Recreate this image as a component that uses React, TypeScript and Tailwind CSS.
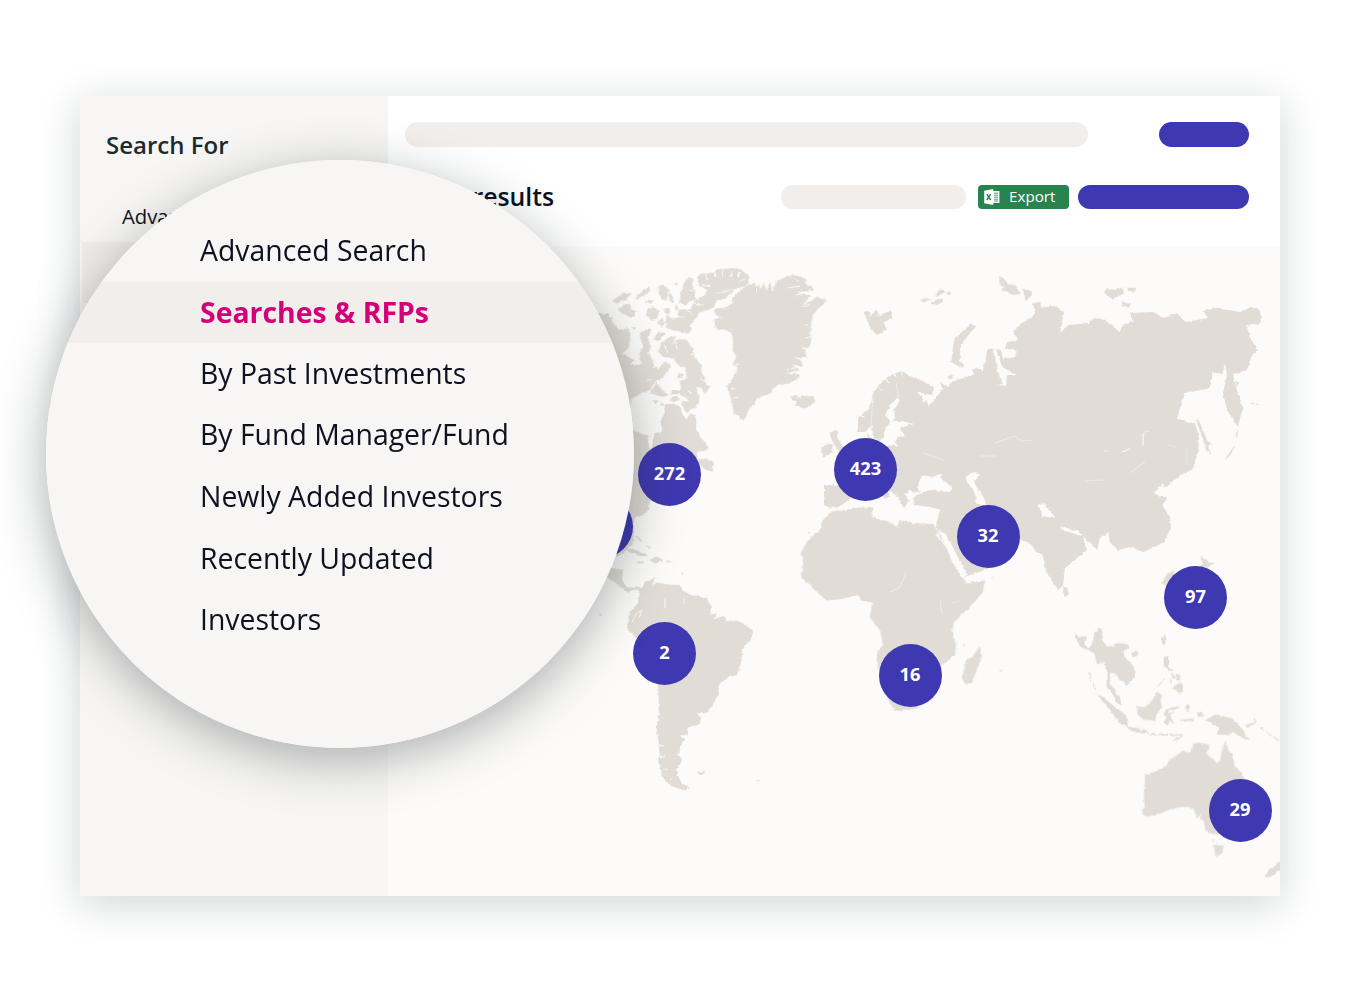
import { clsx } from "clsx";

interface Region {
  x: number;
  y: number;
  d: string;
}

// Coastlines, drawn at a third of a pixel from each region's origin.
const land: Region[] = [
  {
    // Greenland, Iceland and the Canadian arctic
    x: 590,
    y: 250,
    d: `M480 102L505 103 512 120 522 98 530 124 540 97 548 128 560 92 575 88 590 80 605 76 640 82 650 92 642 98 668 112 670 122 612 126 662 136 632 172 680 142 708 150 705 158 685 175 668 195 664 215 660 250 664 265 658 290 645 300 648 320 632 325 636 350 600 345 632 360 585 370 630 376 615 390 595 400 560 406 540 430 500 445 490 465 475 480 462 512 450 500 432 488 425 450 412 410 432 380 445 350 428 345 440 320 430 300 428 255 410 238 378 236 372 208 398 205 372 190 375 178 410 172 430 158 425 145 460 115Z
M325 105L325 78 335 70 360 72 380 62 400 58 430 55 460 65 478 80 475 100 460 108 430 120 400 122 375 130 350 118Z
M318 150L340 140 355 118 375 132 430 122 405 145 380 152 370 172 350 180 325 188 318 205 300 218 285 200 262 196 264 180 300 178Z
M298 80L308 88 306 110 315 120 312 140 320 148 300 152 288 165 268 160 275 120 285 95Z
M230 195L245 206 285 202 310 212 300 225 305 238 295 250 260 242 232 235 228 210Z
M65 152L100 132 125 128 108 148 80 160ZM85 178L105 162 125 168 120 180 140 185 125 202 95 190ZM140 135L178 112 180 122 155 142 140 148ZM205 112L220 105 235 120 230 150 215 148 210 135ZM238 130l12 10 0 18-12-5ZM172 178L190 172 208 182 200 205 185 210 170 198ZM204 216l12-12 8 14-10 12ZM225 175l14 4-2 14-12-4ZM165 155l24-4-8 10ZM255 100l8 0-4 10ZM256 164l8 10-6 8Z
M205 305L215 280 235 262 258 260 240 290 262 268 290 270 298 285 310 295 310 320 335 345 332 365 345 385 345 400 360 410 345 432 332 412 318 410 328 440 325 462 305 465 290 445 268 432 245 432 245 420 275 420 270 395 292 385 285 350 265 345 250 325 220 320Z
M0 190L55 192 72 225 90 240 118 235 122 265 112 300 95 310 132 330 118 345 150 345 178 310 192 350 205 358 225 335 240 345 235 360 215 385 190 400 180 420 150 430 120 450 118 500 0 500Z
M124 232l14 2-6 8ZM150 252L165 240 185 240 172 262 182 290 170 320 155 338 145 318 160 290ZM190 270L205 246 225 250 210 270ZM180 430L200 398 215 420 235 435 220 440ZM190 450l14 4-8 8ZM212 458l10 4-6 6ZM262 375l14-4 4 8-14 4ZM240 448l20-10 10 10-20 8Z
M605 440L620 435 625 448 640 438 670 440 675 455 645 475 615 465 622 455 608 450Z`,
  },
  {
    // North America and the Caribbean
    x: 590,
    y: 400,
    d: `M0 40L120 75 135 95 175 108 172 138 185 150 195 100 215 98 218 80 212 62 225 40 225 16 240 12 270 18 275 42 290 60 300 40 318 48 318 90 330 110 355 140 350 150 320 155 322 178 350 178 370 186 368 214 345 208 330 195 300 220 200 300 178 305 176 328 160 345 132 352 130 395 132 425 100 460 0 500Z
M275 4L322 8 320 22 300 28 292 42 280 20ZM105 446L130 448 172 466 155 470 120 455ZM180 480L200 470 222 482 195 488ZM232 483h10v4h-10zM142 485h18v4h-18zM136 408l20 12-4 4ZM170 436l12 6-4 4ZM276 516l4 8-4 0Z`,
  },
  {
    // South America
    x: 590,
    y: 560,
    d: `M40 50L65 25 98 30 95 60 115 85 140 80 155 85 170 65 192 56 186 78 200 68 240 75 268 75 275 90 300 105 350 115 365 145 355 165 380 160 370 180 390 170 405 170 410 185 440 182 470 195 488 215 485 235 455 270 455 300 440 345 410 352 385 378 385 400 370 430 350 460 318 456 332 475 328 492 292 502 293 525 270 525 285 540 275 550 268 575 258 580 275 595 272 610 260 625 262 645 275 670 295 682 280 690 240 676 218 650 205 600 210 580 205 535 200 500 208 460 205 375 160 290 140 235 112 205 118 158 145 130 150 100 140 88 125 90 110 97 70 62Z
M323 638l20-5-2 8-14 2zM500 660l6 2-2 4ZM28 164l6 0 0 4Z`,
  },
  {
    // British Isles and arctic islands
    x: 790,
    y: 350,
    d: `M120 250L135 240 145 246 140 260 155 285 165 310 150 330 138 318 150 305 138 290 128 275ZM95 295L110 282 127 284 125 308 100 320Z
M222-114L235-116 240-98 258-120 262-100 302-118 306-95 278-85 290-62 262-46 246-58 236-80Z
M392-150l20-6 6 8-16 4ZM436-166l20-18 10 10-18 12ZM420-140l16-8 18-6 8 8-22 10ZM470-172l14 2-8 6Z
M475 78l10-2 2 8-10 4Z`,
  },
  {
    // Africa and Madagascar
    x: 790,
    y: 480,
    d: `M125 95L160 92 200 84 248 82 244 105 260 118 295 125 320 142 330 122 370 130 430 133 442 155 435 165 470 205 485 245 520 295 530 312 585 302 578 335 545 375 490 430 485 455 497 490 495 525 455 555 410 640 380 685 350 688 315 692 300 670 260 545 262 520 280 495 272 455 240 410 248 365 215 362 205 345 180 350 150 357 108 360 75 330 35 290 40 255 35 215 55 180 90 150 100 120Z
M568 500L575 525 560 570 545 608 525 612 516 590 525 565 528 540 550 530ZM52 158l8-2-2 6ZM628 568l8 0-4 4ZM520 490l4 6-4 0ZM602 293l10 0-4 4Z`,
  },
  {
    // Russian arctic, Kamchatka, Sakhalin and the Kurils
    x: 940,
    y: 260,
    d: `M80 205L95 190 105 200 72 240 60 270 58 300 75 320 60 322 35 305 40 260 45 235Z
M178 50L190 55 205 75 195 82 180 75ZM182 90L205 75 225 75 242 102 220 104 200 94ZM250 88L275 95 275 105 258 122ZM492 100L500 85 525 90 548 86 550 98 520 118ZM560 84l28 0-4 10-20-2ZM545 125l28 10-6 6-16-2Z
M768 478L780 490 802 545 815 552 802 555 812 585 800 570 785 525ZM890 508l4 6-6 20ZM884 560l-14 26-14 12 20-30ZM932 428l10 4-8 0ZM948 432l10 2ZM888 366l8 2-6 12Z`,
  },
  {
    // South-east Asia, Japan and New Guinea
    x: 1060,
    y: 550,
    d: `M12 108L20 112 26 130 18 140 10 132ZM422 18L440 34 460 40 440 55 420 52 428 38ZM305 98L318 78 342 60 340 90 318 105Z
M45 250L58 262 78 260 72 278 84 296 96 285 102 250 118 235 128 240 124 268 142 290 160 288 170 280 198 282 208 294 190 302 192 318 215 345 226 365 222 385 200 405 192 395 178 390 165 365 152 368 148 400 160 415 178 440 186 466 170 458 158 432 140 408 144 370 130 335 112 342 104 310 88 302 62 290 52 272Z
M215 312l12-8 8 4-8 14-10-4ZM306 262l10-8 0 14-6 18-4-10ZM312 322L325 318 328 340 322 350 340 362 330 362 312 348ZM335 368l10 12-8 4ZM348 372l10 2 2 22-10-8ZM328 385l10 10-6 4ZM336 415L355 400 368 404 368 425 358 432 350 420ZM314 385L292 410 298 408Z
M112 434L130 442 165 472 190 490 204 512 202 530 178 518 150 480ZM202 530L235 535 262 545 266 550 235 548 205 540ZM270 550h18v5h-18zM296 552h28v4h-28zM330 552h36v4h-36zM340 568l30-12-18 14Z
M230 470L255 472 280 448 292 425 306 436 300 450 305 470 290 490 285 512 250 508 235 498ZM318 480L330 474 358 470 352 476 328 480 322 490 344 486 330 494 340 522 328 510 324 526 314 520 318 500 312 492ZM380 462l8 10-6 12ZM365 510l36-4 0 4-34 4ZM408 490l16-4 8 10-18 4Z
M436 510L465 494 515 505 545 535 566 568 545 562 520 545 505 555 470 550 478 535 460 520ZM555 528l26-10 2-14 4 14-24 14ZM600 530l12 8-4 2ZM620 544l16 14-4 0ZM640 560l12 6 6 6-10-4ZM90 366l2 26-4-10ZM100 402l4 18Z`,
  },
  {
    // Australia and New Zealand
    x: 1120,
    y: 730,
    d: `M75 135L105 125 135 112 155 85 190 62 210 70 222 42 235 38 268 45 258 72 290 96 302 92 306 60 316 32 325 62 338 72 342 105 360 125 375 150 340 300 282 312 258 302 252 275 240 262 250 245 232 262 222 240 205 230 180 230 150 238 120 250 80 260 66 250 75 230 72 195 76 160ZM282 345L312 348 302 370 288 382ZM276 328l6 2-4 4Z
M490 392L470 402 445 425 435 440 450 442 478 418 490 410Z`,
  },
];

const eurasia = `M824 485L846 486 860 460 868 434 873 447 883 445 898 446 895 443 897 437 905 436 900 428 913 424 903 421 893 421 895 418 894 410 900 400 897 398 890 405 885 415 890 422 885 430 884 437 878 441 873 436 872 425 865 432 858 432 858 418 870 408 873 393 882 382 890 375 902 371 910 376 923 381 934 388 932 395 917 392 922 397 923 403 927 400 928 406 934 401 940 392 943 390 940 382 947 387 953 381 973 375 977 368 980 374 975 375 972 369 983 370 985 363 987 350 992 348 995 357 998 372 1003 384 996 385 1006 386 1007 375 1017 375 1002 367 999 357 996 350 1001 349 1003 359 1015 357 1018 352 1005 348 1007 342 1018 340 1013 332 1023 322 1035 315 1033 303 1040 302 1042 308 1053 305 1064 312 1060 333 1068 325 1090 323 1093 318 1105 320 1120 332 1122 325 1133 322 1130 313 1153 312 1163 318 1177 313 1185 322 1208 318 1203 311 1217 308 1240 312 1252 307 1260 310 1261 323 1247 325 1250 338 1258 350 1252 355 1247 370 1233 374 1237 390 1243 407 1238 427 1227 410 1223 393 1227 375 1225 363 1222 375 1213 372 1210 388 1185 393 1177 418 1187 422 1195 423 1199 437 1198 453 1192 470 1183 473 1165 488 1163 483 1154 492 1160 497 1167 497 1162 505 1170 517 1171 528 1163 543 1143 552 1130 547 1118 550 1110 542 1108 533 1100 538 1097 550 1093 545 1083 537 1087 550 1065 568 1063 585 1058 590 1047 573 1042 553 1037 553 1030 543 1020 540 1010 560 990 568 965 577 940 537 936 525 940 510 930 507 915 505 913 497 922 493 910 491 904 494 909 501 904 508 897 496 885 487 890 495 886 500 880 492 860 492 847 502 838 507 830 508 824 505Z`;

const seas = `M922 475L933 477 942 473 940 478 952 487 950 492 930 490 921 493 917 488ZM965 478L973 472 980 475 974 482 985 500 986 507 976 503 975 493Z
M1037 505L1043 503 1055 517 1042 517 1041 510ZM1060 526L1080 532 1082 536 1062 530ZM938 530L946 534 967 575 962 578Z`;

const rivers = `M995 443L1014 436 1022 441 1032 440M980 456h16M1103 451h6M1121 452l10-4M1150 431l-6 1-1 14M1187 449v14M1168 445l8 2M1085 481l20-1M1130 473l16-12M923 453l10 3 12 5M890 592l10-5 6-14M940 600l2 14M952 603l8-2M873 393l-2 33M896 383l3 16`;

// Narrow inlets cut into the northern coasts and Patagonia.
const fjords = `M705 274l3 6M714 270l2 7M722 270l1 7M732 271l-1 6M740 272l-2 6M745 279l-7 3M702 285l9 2M690 290l8 3M695 303l8 2M686 310l6 4M756 284l1 9M772 282l1 9M780 276l-4 8M793 278l6 3M800 286l-12 2M806 293l-10 2M810 305l-9 1M808 325l-4 0M811 337l-6 1M808 349l-6-2M802 360l-8-3M800 367l-12 2M734 365l5-1M733 372l4 3M731 389l4 0M733 399l5-2M664 345l4 8M676 342l1 8M690 356l4-4M698 366l3-3M704 381l-4-1M688 391l5 3M640 355l-4 6M630 350l4 6M646 382l6-3M885 378l4 4M877 387l4 3M870 400l4 2M860 416l5 1M894 372l2 5M902 371l0 6M659 745l5 1M660 757l5-1M664 770l4-2M670 780l4-3`;

const pins = [
  { label: "272", place: "left-[250px] top-[196.5px]" },
  { label: "", place: "left-[182px] top-[249px]" },
  { label: "423", place: "left-[446px] top-[191.5px]" },
  { label: "32", place: "left-[568.5px] top-[259px]" },
  { label: "97", place: "left-[776px] top-[319.5px]" },
  { label: "2", place: "left-[245px] top-[376px]" },
  { label: "16", place: "left-[490.5px] top-[397.5px]" },
  { label: "29", place: "left-[820.5px] top-[532.5px]" },
];

const menu = [
  "Advanced Search",
  "Searches & RFPs",
  "By Past Investments",
  "By Fund Manager/Fund",
  "Newly Added Investors",
  "Recently Updated",
  "Investors",
];

function ExcelIcon() {
  return (
    <svg className="h-4 w-4" viewBox="0 0 16 16">
      <path d="M9 2h6.4v12H9z" fill="#fff" />
      <path d="M0.2 1.7 9.2 0v16L0.2 14.3z" fill="#fff" />
      <path d="M2.8 5.2 6.6 11M6.6 5.2 2.8 11" stroke="#29834f" strokeWidth="1.4" />
      <path
        d="M10 4.2h4M10 6.2h4M10 8.2h4M10 10.2h4M10 12h4"
        stroke="#29834f"
        strokeWidth="0.8"
      />
    </svg>
  );
}

function WorldMap() {
  return (
    <div className="relative h-[650px] overflow-hidden bg-[#fcfbf9]">
      <svg className="block h-[650px] w-[892px]" viewBox="388 246 892 650">
        <filter id="coast" x="0" y="0" width="100%" height="100%">
          <feTurbulence type="fractalNoise" baseFrequency="0.25" numOctaves="2" seed="4" />
          <feDisplacementMap
            in="SourceGraphic"
            scale="3.2"
            xChannelSelector="R"
            yChannelSelector="G"
          />
        </filter>
        <g filter="url(#coast)" fill="#e1dcd6">
          <path d={eurasia} />
          {land.map((r) => (
            <path
              key={`${r.x}-${r.y}`}
              d={r.d}
              transform={`translate(${r.x} ${r.y}) scale(0.33333)`}
              stroke="#e1dcd6"
              strokeWidth="1.6"
            />
          ))}
          <path d={seas} fill="#fcfbf9" />
          <path d={fjords} fill="none" stroke="#fcfbf9" strokeWidth="1" />
        </g>
        <path d={rivers} fill="none" stroke="#fcfbf9" strokeWidth="0.6" opacity="0.8" />
        <path
          d="M1143 433v12M1122 452l8-3M632 622l4-8 6-4-3 8M665 598v10M684 598v6"
          fill="none"
          stroke="#fcfbf9"
          strokeWidth="0.9"
        />
      </svg>
      {pins.map((pin) => (
        <div
          key={pin.place}
          className={clsx(
            "absolute flex h-[63px] w-[63px] items-center justify-center rounded-full bg-[#3f39b1] pb-[3px] text-[18.3px] font-bold text-white",
            pin.place,
          )}
        >
          {pin.label}
        </div>
      ))}
    </div>
  );
}

function Sidebar() {
  return (
    <aside className="w-[308px] shrink-0 bg-[#f7f6f4]">
      <h2 className="px-[26px] pt-8 text-2xl leading-[34px] font-semibold text-[#1c2b30]">
        Search For
      </h2>
      <p className="mt-[39px] pl-[42px] text-[20.3px] leading-[30px] text-[#0d1120]">
        Advanced Search
      </p>
      <div className="mt-[11px] ml-0.5 h-[61px] bg-[#f0ecea]" />
    </aside>
  );
}

function Lens() {
  return (
    <div className="absolute top-[160px] left-[46px] h-[588px] w-[588px] overflow-hidden rounded-full bg-[#f7f6f4] pt-[60px]">
      {menu.map((item, i) => (
        <div
          key={item}
          className={clsx(
            "flex items-center pb-px pl-[154px] text-[28.4px] whitespace-nowrap",
            i === 1
              ? "h-[61px] bg-[#f1eeeb] font-bold text-[#d4007a]"
              : "text-[#0d1120]",
            (i === 0 || i > 2) && "h-[62px]",
            i === 2 && "h-[61px]",
            i === 6 && "-mt-px",
          )}
        >
          {item}
        </div>
      ))}
    </div>
  );
}

export default function App() {
  return (
    <div className="relative h-[992px] w-[1360px] overflow-hidden bg-white px-20 py-24 font-['Open_Sans',sans-serif]">
      <div className="flex h-[800px] w-[1200px] bg-white shadow-[0_8px_40px_rgba(20,45,45,0.2)]">
        <Sidebar />
        <main className="flex-1">
          <header className="h-[150px] pr-[31px] pl-[17px]">
            <div className="flex justify-between pt-[26px]">
              <div className="h-[24.5px] w-[683px] rounded-full bg-[#f1eeeb]" />
              <div className="h-[24.5px] w-[90px] rounded-full bg-[#3f39b1]" />
            </div>
            <div className="mt-[38px] flex h-[24.5px] items-center">
              <div className="w-[375.5px] pb-px pl-[67.5px] text-[24.8px] font-semibold text-[#0d1120]">
                results
              </div>
              <div className="h-[24.5px] w-[185.5px] rounded-full bg-[#f1eeeb]" />
              <div className="ml-3 flex h-[24.5px] w-[90.5px] items-center gap-[9px] rounded bg-[#29834f] pl-1.5 text-[15.2px] text-white">
                <ExcelIcon />
                <span>Export</span>
              </div>
              <div className="ml-[9px] h-[24.5px] flex-1 rounded-full bg-[#3f39b1]" />
            </div>
          </header>
          <WorldMap />
        </main>
      </div>
      <div className="absolute top-[160px] left-[46px] h-[588px] w-[588px] rounded-full shadow-[0_12px_52px_rgba(15,28,28,0.34)]" />
      <Lens />
    </div>
  );
}
